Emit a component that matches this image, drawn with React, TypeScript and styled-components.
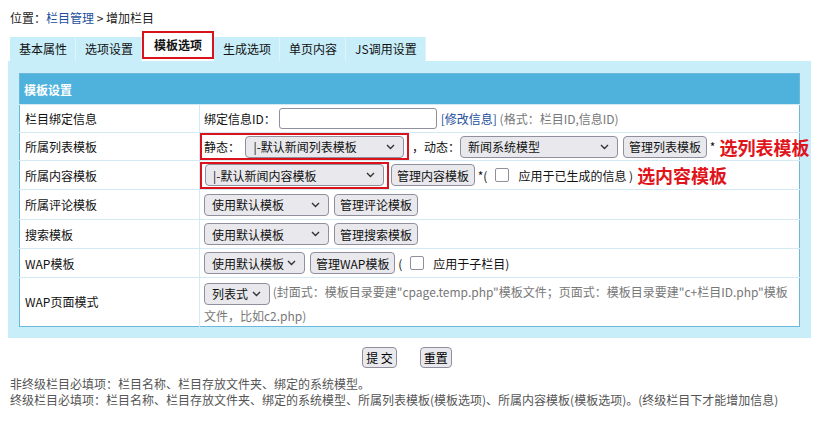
import React from 'react';
import styled, { createGlobalStyle } from 'styled-components';

const GlobalStyle = createGlobalStyle`
  html, body {
    margin: 0;
    padding: 0;
    background: #fff;
  }
  body {
    font-family: "Noto Sans CJK SC", "Noto Sans", sans-serif;
    font-size: 12px;
    color: #222;
  }
`

const Page = styled.div`
  width: 803px;
  padding: 8px 4px 0 8px;
`

const Crumb = styled.div`
  height: 20px;
  line-height: 20px;
  padding-left: 2px;
`

const CrumbLink = styled.a`
  color: #1d4f9c;
  text-decoration: none;
`

const TabBar = styled.div`
  display: flex;
  align-items: flex-end;
  margin-left: 2px;
  height: 33px;
`

const Tab = styled.div<{ $active?: boolean }>`
  box-sizing: border-box;
  height: ${p => (p.$active ? '28px' : '24px')};
  line-height: 24px;
  margin-bottom: ${p => (p.$active ? '2px' : '0')};
  padding: ${p => (p.$active ? '0 10px' : '0 8px 0 9px')};
  background: ${p => (p.$active ? '#fff' : '#c8eefa')};
  border: ${p => (p.$active ? '2px solid #d8131b' : 'none')};
  border-right: ${p => (p.$active ? '2px solid #d8131b' : '1px solid #def5fc')};
  font-weight: ${p => (p.$active ? 'bold' : 'normal')};
  color: #111;
  white-space: nowrap;
`

const Panel = styled.div`
  background: #c8eefa;
  padding: 12px 11px 11px 11px;
`

const Table = styled.table`
  width: 100%;
  table-layout: fixed;
  border-collapse: collapse;
  background: #fff;
  border: 1px solid #6db8da;
`

const HeadCell = styled.th`
  height: 30px;
  padding: 0 4px;
  background: #4fb2dd;
  color: #fff;
  font-weight: bold;
  text-align: left;
`

const Row = styled.tr<{ $h?: number }>`
  height: ${p => p.$h ?? 29}px;
  border-top: 1px solid #d3eaf4;
`

const LabelCell = styled.td`
  padding: 0 0 0 5px;
  border-right: 1px solid #d3eaf4;
  vertical-align: middle;
  color: #111;
`

const ValueCell = styled.td`
  padding: 0 4px;
  vertical-align: middle;
  overflow: visible;
  color: #111;
`

const Inline = styled.div`
  display: flex;
  align-items: center;
  height: 22px;
  white-space: nowrap;
  & > * {
    flex-shrink: 0;
  }
`

const Mark = styled.span<{ $pl?: number }>`
  display: flex;
  align-items: center;
  box-sizing: border-box;
  border: 2px solid #d8131b;
  padding: 0 3px 0 ${p => p.$pl ?? 2}px;
  margin-left: -4px;
  height: 27px;
`

const SelectWrap = styled.span<{ $w: number }>`
  position: relative;
  display: inline-block;
  flex-shrink: 0;
  width: ${p => p.$w}px;
  height: 22px;
  vertical-align: middle;
`

const SelectBox = styled.select`
  display: block;
  appearance: none;
  box-sizing: border-box;
  width: 100%;
  height: 100%;
  padding: 0 16px 0 7px;
  font-family: inherit;
  font-size: 12px;
  color: #111;
  background: #e9e9ed;
  border: 1px solid #8f8f9d;
  border-radius: 4px;
`

const Chevron = styled.svg`
  position: absolute;
  right: 9px;
  top: 8px;
  pointer-events: none;
`

const Btn = styled.button<{ $ml?: number }>`
  box-sizing: border-box;
  flex-shrink: 0;
  height: 22px;
  margin-left: ${p => p.$ml ?? 5}px;
  padding: 0 5px;
  font-family: inherit;
  font-size: 12px;
  color: #111;
  background: #e9e9ed;
  border: 1px solid #8f8f9d;
  border-radius: 4px;
`

const TextInput = styled.input`
  box-sizing: border-box;
  width: 158px;
  height: 21px;
  margin-left: 3px;
  border: 1px solid #8f8f9d;
  border-radius: 3px;
`

const Link = styled.a`
  color: #1d4f9c;
  text-decoration: none;
  margin-left: 4px;
`

const Hint = styled.span`
  color: #777;
`

const Check = styled.span`
  display: inline-block;
  box-sizing: border-box;
  width: 14px;
  height: 14px;
  margin: 0 9px 0 8px;
  border: 1px solid #8f8f9d;
  border-radius: 2px;
  background: #fff;
`

const Note = styled.span`
  margin-left: 4px;
  color: #e0141b;
  font-size: 18px;
  font-weight: bold;
`

const WrapText = styled.div`
  padding-top: 3px;
  color: #777;
  line-height: 21px;
  min-height: 42px;
`

const Actions = styled.div`
  display: flex;
  justify-content: center;
  gap: 23px;
  padding: 9px 5px 0 0;
`

const FormButton = styled.button`
  box-sizing: border-box;
  height: 21px;
  padding: 0 3px;
  font-family: inherit;
  font-size: 12px;
  background: #e9e9ed;
  border: 1px solid #8f8f9d;
  border-radius: 4px;
`

const Footer = styled.div`
  padding: 8px 0 0 2px;
  line-height: 16px;
  color: #555;
`

function Select({ w, value }: { w: number; value: string }) {
  return (
    <SelectWrap $w={w}>
      <SelectBox defaultValue={value}>
        <option>{value}</option>
      </SelectBox>
      <Chevron width="9" height="6" viewBox="0 0 9 6">
        <path d="M1 1l3.5 3.5L8 1" fill="none" stroke="#333" strokeWidth="1.4" />
      </Chevron>
    </SelectWrap>
  )
}

const tabs = ['基本属性', '选项设置', '模板选项', '生成选项', '单页内容', 'JS调用设置']

export default function App() {
  return <Page>
    <GlobalStyle />
    <Crumb>位置：<CrumbLink href="#">栏目管理</CrumbLink> &gt; 增加栏目</Crumb>
    <TabBar>
      {tabs.map((t, i) => <Tab key={t} $active={i === 2}>{t}</Tab>)}
    </TabBar>
    <Panel>
      <Table>
        <colgroup>
          <col style={{ width: 180 }} />
          <col />
        </colgroup>
        <thead>
          <tr><HeadCell colSpan={2}>模板设置</HeadCell></tr>
        </thead>
        <tbody>
          <Row $h={28}>
            <LabelCell>栏目绑定信息</LabelCell>
            <ValueCell>
              <Inline>
                绑定信息ID：<TextInput type="text" />
                <Link href="#">[修改信息]</Link>&nbsp;<Hint>(格式：栏目ID,信息ID)</Hint>
              </Inline>
            </ValueCell>
          </Row>
          <Row $h={28}>
            <LabelCell>所属列表模板</LabelCell>
            <ValueCell>
              <Inline>
                <Mark>静态：&nbsp;&nbsp;<Select w={159} value="|-默认新闻列表模板" /></Mark>
                <span>&nbsp;，动态：</span><Select w={158} value="新闻系统模型" />
                <Btn>管理列表模板</Btn><span>&nbsp;*</span><Note>选列表模板</Note>
              </Inline>
            </ValueCell>
          </Row>
          <Row>
            <LabelCell>所属内容模板</LabelCell>
            <ValueCell>
              <Inline>
                <Mark $pl={3}><Select w={179} value="|-默认新闻内容模板" /></Mark>
                <Btn $ml={2}>管理内容模板</Btn><span>&nbsp;*(</span><Check /><span>应用于已生成的信息 )</span><Note>选内容模板</Note>
              </Inline>
            </ValueCell>
          </Row>
          <Row $h={30}>
            <LabelCell>所属评论模板</LabelCell>
            <ValueCell>
              <Inline>
                <Select w={125} value="使用默认模板" /><Btn>管理评论模板</Btn>
              </Inline>
            </ValueCell>
          </Row>
          <Row>
            <LabelCell>搜索模板</LabelCell>
            <ValueCell>
              <Inline>
                <Select w={125} value="使用默认模板" /><Btn>管理搜索模板</Btn>
              </Inline>
            </ValueCell>
          </Row>
          <Row>
            <LabelCell>WAP模板</LabelCell>
            <ValueCell>
              <Inline>
                <Select w={101} value="使用默认模板" /><Btn>管理WAP模板</Btn><span>&nbsp;(</span><Check /><span>应用于子栏目)</span>
              </Inline>
            </ValueCell>
          </Row>
          <Row $h={45}>
            <LabelCell>WAP页面模式</LabelCell>
            <ValueCell>
              <WrapText>
                <Select w={66} value="列表式" /> (封面式：模板目录要建"cpage.temp.php"模板文件；页面式：模板目录要建"c+栏目ID.php"模板文件，比如c2.php)
              </WrapText>
            </ValueCell>
          </Row>
        </tbody>
      </Table>
    </Panel>
    <Actions>
      <FormButton>提 交</FormButton>
      <FormButton>重置</FormButton>
    </Actions>
    <Footer>
      <div>非终级栏目必填项：栏目名称、栏目存放文件夹、绑定的系统模型。</div>
      <div>终级栏目必填项：栏目名称、栏目存放文件夹、绑定的系统模型、所属列表模板(模板选项)、所属内容模板(模板选项)。(终级栏目下才能增加信息)</div>
    </Footer>
  </Page>
}
